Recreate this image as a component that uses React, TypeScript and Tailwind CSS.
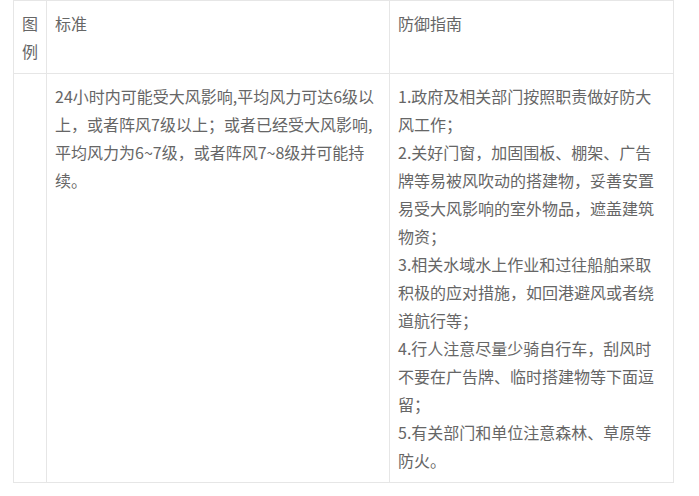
import React from "react";

const leftLines = [
  "24小时内可能受大风影响,平均风力可达6级以",
  "上，或者阵风7级以上；或者已经受大风影响,",
  "平均风力为6~7级，或者阵风7~8级并可能持",
  "续。",
];

const rightLines = [
  "1.政府及相关部门按照职责做好防大",
  "风工作；",
  "2.关好门窗，加固围板、棚架、广告",
  "牌等易被风吹动的搭建物，妥善安置",
  "易受大风影响的室外物品，遮盖建筑",
  "物资；",
  "3.相关水域水上作业和过往船舶采取",
  "积极的应对措施，如回港避风或者绕",
  "道航行等；",
  "4.行人注意尽量少骑自行车，刮风时",
  "不要在广告牌、临时搭建物等下面逗",
  "留；",
  "5.有关部门和单位注意森林、草原等",
  "防火。",
];

export default function App() {
  return (
    <div
      className="w-[699px] h-[496px] bg-white overflow-hidden text-[16px] leading-[28px] text-[#666]"
      style={{ fontFamily: '"Noto Sans CJK SC", "Microsoft YaHei", sans-serif' }}
    >
      <table className="ml-[13px] w-[660px] table-fixed border-collapse">
        <colgroup>
          <col className="w-[33px]" />
          <col className="w-[343px]" />
          <col className="w-[284px]" />
        </colgroup>
        <tbody>
          <tr>
            <td className="border border-[#e6e6e6] p-2 align-top break-all">图例</td>
            <td className="border border-[#e6e6e6] p-2 align-top">标准</td>
            <td className="border border-[#e6e6e6] p-2 align-top">防御指南</td>
          </tr>
          <tr>
            <td className="border border-[#e6e6e6] p-2 align-top"></td>
            <td className="border border-[#e6e6e6] p-2 align-top">
              {leftLines.map((l, i) => (
                <div key={i} className="whitespace-nowrap">
                  {l}
                </div>
              ))}
            </td>
            <td className="border border-[#e6e6e6] p-2 align-top">
              {rightLines.map((l, i) => (
                <div key={i} className="whitespace-nowrap">
                  {l}
                </div>
              ))}
            </td>
          </tr>
        </tbody>
      </table>
    </div>
  );
}
